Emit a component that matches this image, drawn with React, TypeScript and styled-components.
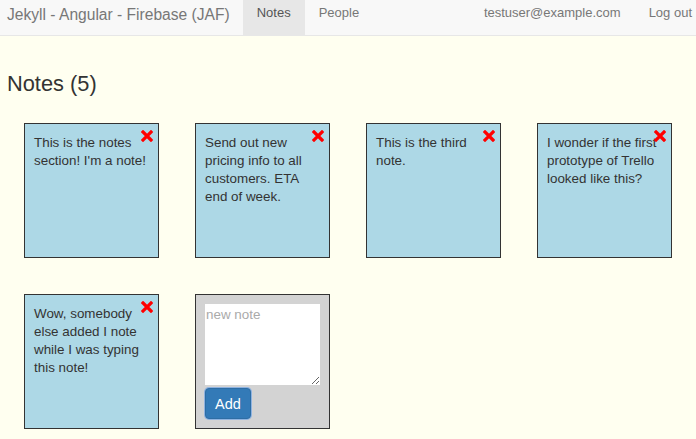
import React from 'react';
import styled, { createGlobalStyle } from 'styled-components';

const GlobalStyle = createGlobalStyle`
    html, body {
        margin: 0;
        padding: 0;
        background: #fffff0;
        font-family: "Liberation Sans", Arial, sans-serif;
        font-size: 13.4px;
        color: #333;
    }
`;

const Navbar = styled.nav`
    display: flex;
    align-items: stretch;
    height: 35px;
    background: #f8f8f8;
    border-bottom: 1px solid #e7e7e7;
`;

const Brand = styled.div`
    padding: 5px 13px 0 7px;
    font-size: 15.6px;
    line-height: 20px;
    color: #777;
`;

const NavItem = styled.a<{ active?: boolean; last?: boolean }>`
    padding: 4px ${props => (props.last ? '4px' : '14px')} 0 14px;
    font-size: 13px;
    line-height: 18px;
    color: ${props => (props.active ? '#555' : '#777')};
    background: ${props => (props.active ? '#e7e7e7' : 'transparent')};
    text-decoration: none;
`;

const Spacer = styled.div`
    flex: 1;
`;

const Page = styled.main`
    padding: 0 7px;
`;

const Heading = styled.h3`
    margin: 34px 0 25px;
    font-size: 21.8px;
    font-weight: 400;
    line-height: 28px;
    color: #333;
`;

const Board = styled.div`
    display: flex;
    flex-wrap: wrap;
    gap: 36px;
    padding-left: 17px;
`;

const Card = styled.div<{ backgroundColor?: string }>`
    position: relative;
    box-sizing: border-box;
    width: 135px;
    height: 135px;
    padding: 10px 9px 9px;
    border: 1px solid #333;
    background: ${props => props.backgroundColor || '#add8e6'};
    line-height: 18px;
`;

const NewNoteCard = styled(Card)`
    padding-top: 9px;
`;

const RemoveButton = styled.span`
    position: absolute;
    top: 5px;
    right: 5px;
    width: 12px;
    height: 12px;
    cursor: pointer;
`;

const NoteInput = styled.textarea`
    display: block;
    box-sizing: border-box;
    width: 115px;
    height: 81px;
    margin: 0 0 3px;
    padding: 3px 1px 2px;
    border: none;
    font-family: "Liberation Sans", Arial, sans-serif;
    font-size: 13.4px;
    color: #333;
    &::placeholder {
        color: #aaa;
    }
`;

const AddButton = styled.button`
    height: 31px;
    padding: 0 9px;
    border: 1px solid #2e6da4;
    border-radius: 4px;
    background: #337ab7;
    color: #fff;
    font-family: "Liberation Sans", Arial, sans-serif;
    font-size: 14.5px;
    box-shadow: 0 0 0 1px #8fb3e0;
`;

const notes = [
    "This is the notes section! I'm a note!",
    'Send out new pricing info to all customers. ETA end of week.',
    'This is the third note.',
    'I wonder if the first prototype of Trello looked like this?',
    'Wow, somebody else added I note while I was typing this note!',
];

const RemoveIcon = () => (
    <svg width="12" height="12" viewBox="0 0 12 12">
        <path d="M2 2 L10 10 M10 2 L2 10" stroke="#f00" strokeWidth="3.2" strokeLinecap="square" />
    </svg>
);

export default function App() {
    return (
        <>
            <GlobalStyle />
            <Navbar>
                <Brand>Jekyll - Angular - Firebase (JAF)</Brand>
                <NavItem active>Notes</NavItem>
                <NavItem>People</NavItem>
                <Spacer />
                <NavItem>testuser@example.com</NavItem>
                <NavItem last>Log out</NavItem>
            </Navbar>
            <Page>
                <Heading>Notes ({notes.length})</Heading>
                <Board>
                    {notes.map((note, i) => (
                        <Card key={i}>
                            <RemoveButton>
                                <RemoveIcon />
                            </RemoveButton>
                            {note}
                        </Card>
                    ))}
                    <NewNoteCard backgroundColor="#d3d3d3">
                        <NoteInput placeholder="new note" />
                        <AddButton>Add</AddButton>
                    </NewNoteCard>
                </Board>
            </Page>
        </>
    );
}
